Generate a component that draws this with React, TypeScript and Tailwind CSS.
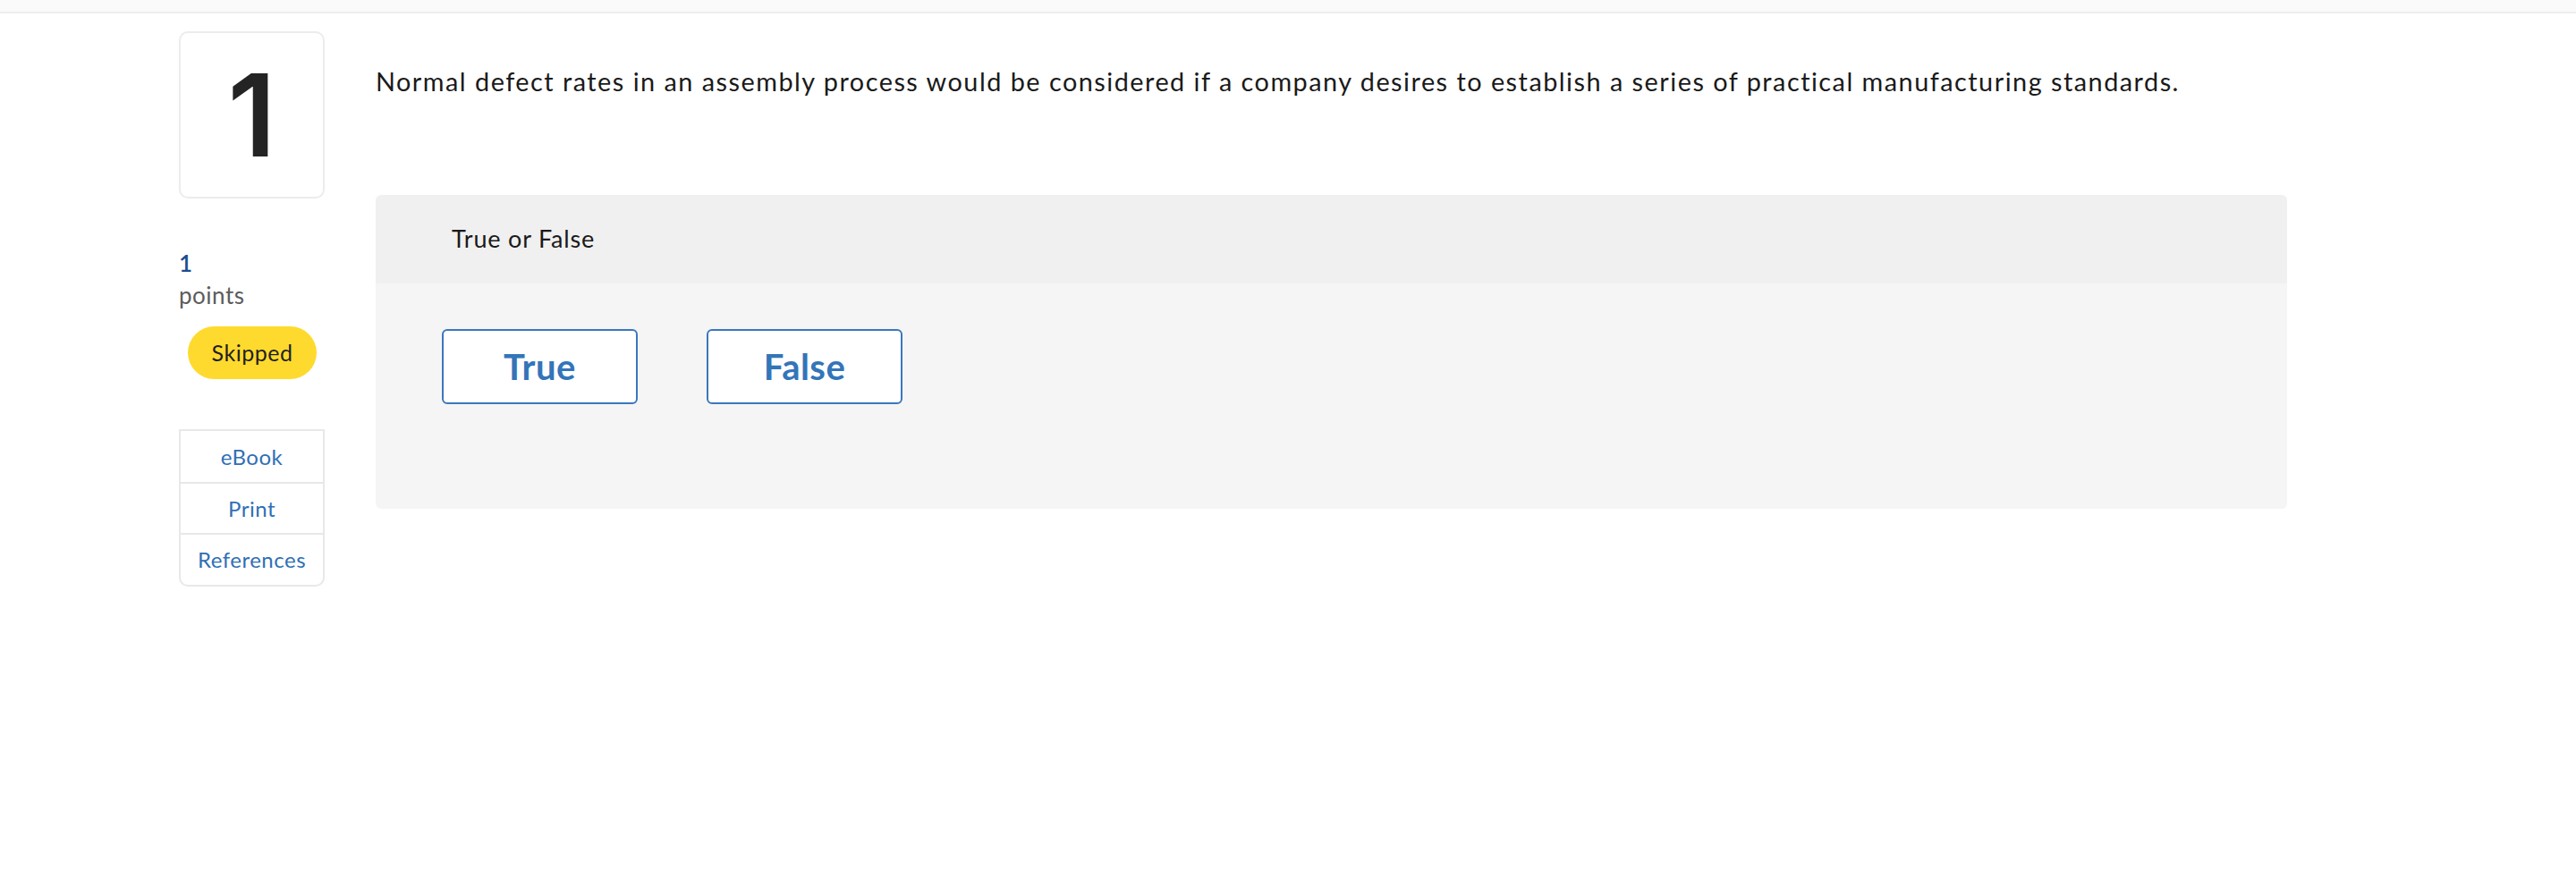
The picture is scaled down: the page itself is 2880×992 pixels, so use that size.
import React from 'react';

const font = { fontFamily: 'Lato, "Open Sans", Arial, sans-serif' };

function SideColumn() {
	return (
		<aside className="flex w-[163px] flex-col">
			<div className="flex h-[187px] items-center justify-center rounded-[10px] border-2 border-[#ececec] bg-white">
				<span className="font-['Inter',sans-serif] text-[128px] font-semibold leading-none text-[#242424]">1</span>
			</div>
			<div className="mt-[54px] text-[26px] leading-[36px] tracking-[0.5px]">
				<div className="font-semibold text-[#1d4f8f]">1</div>
				<div className="text-[#5c5c5c]">points</div>
			</div>
			<div className="mt-[17px] ml-[10px] flex h-[59px] w-[144px] items-center justify-center rounded-full bg-[#ffda2e] text-[25px] tracking-[0.5px] text-[#1f1f1f]">
				Skipped
			</div>
			<ul className="mt-[56px] rounded-b-[10px] border-2 border-[#e8e8e8] bg-white text-[24px] tracking-[0.5px] text-[#2f6fb5]">
				<li className="flex h-[59px] items-center justify-center border-b-2 border-[#e8e8e8]">eBook</li>
				<li className="flex h-[57px] items-center justify-center border-b-2 border-[#e8e8e8]">Print</li>
				<li className="flex h-[56px] items-center justify-center">References</li>
			</ul>
		</aside>
	);
}

function Choice({ label }: { label: string }) {
	return (
		<button
			type="button"
			className="flex h-[84px] w-[219px] items-center justify-center rounded-[6px] border-2 border-[#3a77bd] bg-white text-[40px] font-bold tracking-[0.5px] text-[#3375b9]"
		>
			{label}
		</button>
	);
}

export default function App() {
	return (
		<div className="min-h-screen w-full bg-white" style={font}>
			<div className="h-[15px] border-b-2 border-[#eeeeee] bg-[#fafafa]" />
			<div className="flex pt-[20px] pl-[200px]">
				<SideColumn />
				<main className="ml-[57px] w-[2137px]">
					<p className="pt-[36px] text-[28.8px] leading-[40px] tracking-[1.5px] text-[#1a1a1a]">
						Normal defect rates in an assembly process would be considered if a company desires to establish a series of practical manufacturing standards.
					</p>
					<section className="mt-[107px] overflow-hidden rounded-[6px]">
						<div className="flex h-[99px] items-center bg-[#f0f0f0] pl-[85px] text-[27px] tracking-[0.8px] text-[#1a1a1a]">True or False</div>
						<div className="flex h-[252px] gap-[77px] bg-[#f5f5f5] pt-[51px] pl-[74px]">
							<Choice label="True" />
							<Choice label="False" />
						</div>
					</section>
				</main>
			</div>
		</div>
	);
}
